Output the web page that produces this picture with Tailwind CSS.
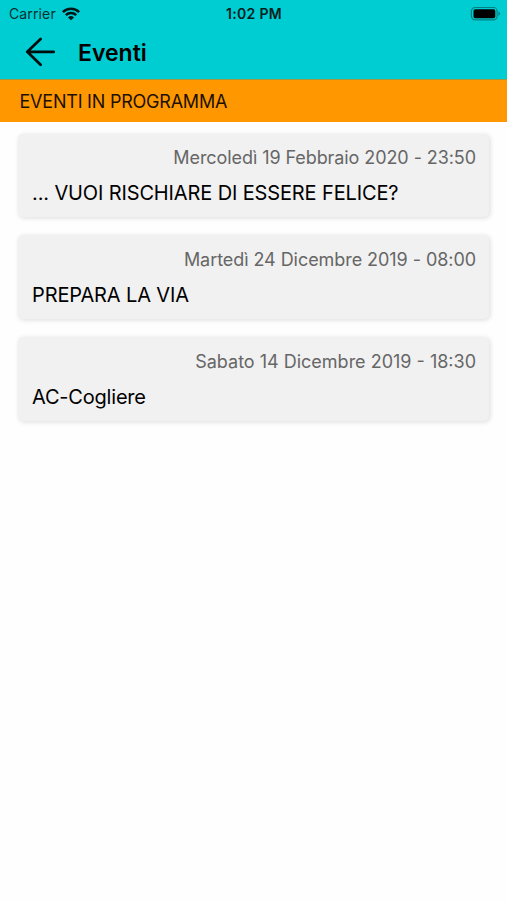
<!DOCTYPE html>
<html lang="it">
<head>
<meta charset="utf-8">
<title>Eventi</title>
<script src="https://cdn.jsdelivr.net/npm/@tailwindcss/browser@4"></script>
</head>
<body class="bg-white font-['Inter',sans-serif] text-black">
<div class="flex h-[900px] w-[507px] flex-col overflow-hidden bg-[#fefefe]">
  <header class="h-[79px] bg-[#00cdd1]">
    <div class="grid h-7 grid-cols-3 items-center pl-[9px] pr-[6px]">
      <div class="flex items-center gap-[6px] text-[#052f30]">
        <span class="text-[14px] leading-7 tracking-[0.13px]">Carrier</span>
        <svg class="h-[14px] w-[18px]" viewBox="0 0 18 14" fill="none" stroke="#001516" stroke-width="2.5">
          <path d="M.9 5.1a11.5 11.5 0 0 1 16.2 0M3.8 8.2a7.4 7.4 0 0 1 10.4 0"/>
          <path d="M9 13.3 6 10.4a4.3 4.3 0 0 1 6 0z" fill="#001516" stroke="none"/>
        </svg>
      </div>
      <span class="pr-[2px] text-center text-[14px] font-semibold leading-7 tracking-[0.3px] text-[#002021]">1:02 PM</span>
      <svg class="h-[14px] w-[31px] justify-self-end" viewBox="0 0 31 14">
        <rect x="1.4" y=".5" width="25.7" height="12.4" rx="3.8" fill="none" stroke="#048085" stroke-width="1.2"/>
        <rect x="3.5" y="2.3" width="21.8" height="8.9" rx="1.8" fill="#000"/>
        <path d="M28.4 4.6c2.4 1 2.4 3.3 0 4.3z" fill="#048085"/>
      </svg>
    </div>
    <div class="flex h-[48px] items-center pl-[25px]">
      <svg class="h-[30px] w-[30px]" viewBox="0 0 30 30" fill="none" stroke="#000d0d" stroke-width="2.7" stroke-linecap="round" stroke-linejoin="round">
        <path d="M28.7 14.8H2.3M15.6 2 2.3 14.8l13.3 12.9"/>
      </svg>
      <h1 class="ml-[23px] pt-px text-[23px] font-semibold leading-[48px]">Eventi</h1>
    </div>
  </header>
  <h2 class="h-[43px] border-t border-[#9b9a48] bg-[#ff9800] pl-[19.5px] pt-px text-[18px] leading-[42px] tracking-[-0.22px] text-[#1c1000]">EVENTI IN PROGRAMMA</h2>
  <main class="flex flex-col gap-[18px] px-[18px] pt-[11.6px]">
    <article class="h-[83.8px] rounded-[5px] bg-[#f1f1f1] pl-[14px] pr-[13px] shadow-[1px_1px_5px_rgba(0,0,0,0.14)]">
      <p class="pt-[6.4px] text-right text-[18px] leading-[36px] tracking-[-0.08px] text-[#666]">Mercoledì 19 Febbraio 2020 - 23:50</p>
      <p class="text-[20px] leading-[35px] tracking-[-0.13px]">... VUOI RISCHIARE DI ESSERE FELICE?</p>
    </article>
    <article class="h-[83.8px] rounded-[5px] bg-[#f1f1f1] pl-[14px] pr-[13px] shadow-[1px_1px_5px_rgba(0,0,0,0.14)]">
      <p class="pt-[6.6px] text-right text-[18px] leading-[36px] tracking-[-0.06px] text-[#666]">Martedì 24 Dicembre 2019 - 08:00</p>
      <p class="text-[20px] leading-[34px] tracking-[-0.13px]">PREPARA LA VIA</p>
    </article>
    <article class="h-[83.8px] rounded-[5px] bg-[#f1f1f1] pl-[14px] pr-[13px] shadow-[1px_1px_5px_rgba(0,0,0,0.14)]">
      <p class="pt-[6.8px] text-right text-[18px] leading-[36px] text-[#666]">Sabato 14 Dicembre 2019 - 18:30</p>
      <p class="text-[20px] leading-[34px] tracking-[-0.2px]">AC-Cogliere</p>
    </article>
  </main>
</div>
</body>
</html>
